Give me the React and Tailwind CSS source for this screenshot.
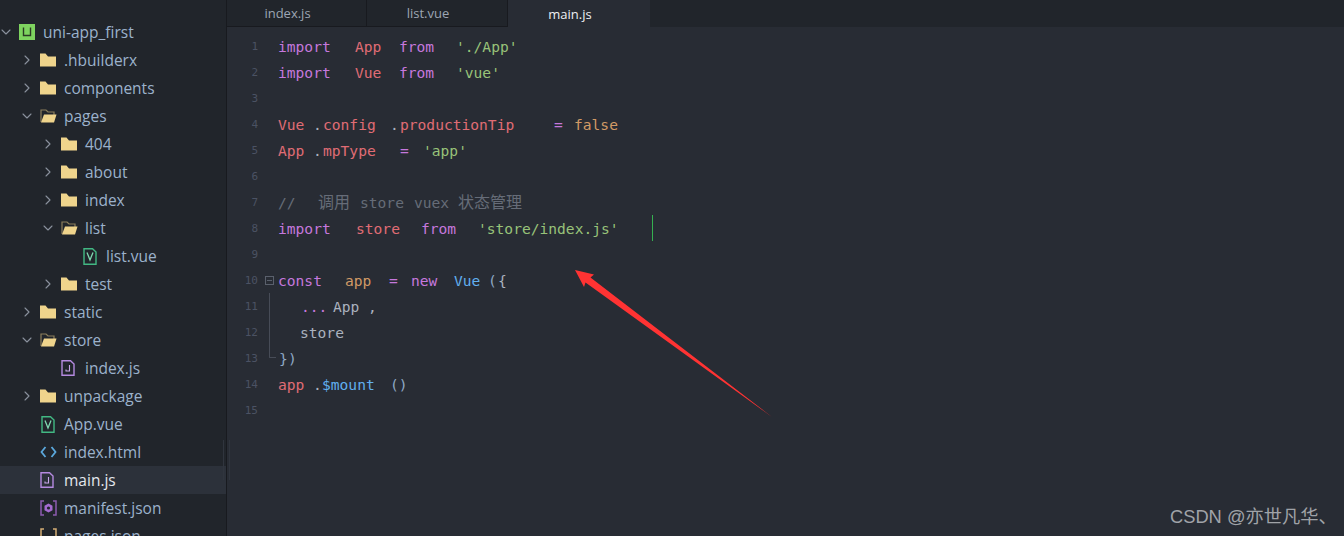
import React from "react";
import { ChevronRight, ChevronDown } from "lucide-react";

const PINK = "text-[#c678dd]";
const RED = "text-[#e06c75]";
const GREEN = "text-[#98c379]";
const ORANGE = "text-[#d19a66]";
const BLUE = "text-[#61afef]";
const PLAIN = "text-[#abb2bf]";
const BRACKET = "text-[#8fa8c4]";
const GRAY = "text-[#666c78]";

// every token is [text, colour, column width]
const lines = [
  [["import", PINK, "w-[77px]"], ["App", RED, "w-[44px]"], ["from", PINK, "w-[57px]"], ["'./App'", GREEN, "w-[70px]"]],
  [["import", PINK, "w-[77px]"], ["Vue", RED, "w-[44px]"], ["from", PINK, "w-[57px]"], ["'vue'", GREEN, "w-[50px]"]],
  [],
  [["Vue", RED, "w-[35px]"], [".", PLAIN, "w-[10px]"], ["config", RED, "w-[67px]"], [".", PLAIN, "w-[10px]"], ["productionTip", RED, "w-[154px]"], ["=", PINK, "w-[20px]"], ["false", ORANGE, "w-[50px]"]],
  [["App", RED, "w-[35px]"], [".", PLAIN, "w-[10px]"], ["mpType", RED, "w-[77px]"], ["=", PINK, "w-[23px]"], ["'app'", GREEN, "w-[50px]"]],
  [],
  [["//", GRAY, "w-[40px]"], ["调用", `${GRAY} text-[16px]`, "w-[42px]"], ["store", GRAY, "w-[54px]"], ["vuex", GRAY, "w-[44px]"], ["状态管理", `${GRAY} text-[16px]`, "w-[66px]"]],
  [["import", PINK, "w-[78px]"], ["store", RED, "w-[65px]"], ["from", PINK, "w-[57px]"], ["'store/index.js'", GREEN, "w-[142px]"]],
  [],
  [["const", PINK, "w-[67px]"], ["app", ORANGE, "w-[44px]"], ["=", PINK, "w-[22px]"], ["new", PINK, "w-[43px]"], ["Vue", BLUE, "w-[34px]"], ["(", BRACKET, "w-[10px]"], ["{", PLAIN, "w-[10px]"]],
  [["", PLAIN, "w-[23px]"], ["...", PINK, "w-[32px]"], ["App", PLAIN, "w-[35px]"], [",", PLAIN, "w-[10px]"]],
  [["", PLAIN, "w-[22px]"], ["store", PLAIN, "w-[50px]"]],
  [["", PLAIN, "w-[1px]"], ["}", BRACKET, "w-[9px]"], [")", BRACKET, "w-[10px]"]],
  [["app", RED, "w-[35px]"], [".", PLAIN, "w-[9px]"], ["$mount", BLUE, "w-[68px]"], ["()", BRACKET, "w-[20px]"]],
  [],
];

const tree = [
  { name: "uni-app_first", pad: "pl-0", arrow: "down", icon: "root" },
  { name: ".hbuilderx", pad: "pl-[21px]", arrow: "right", icon: "folder" },
  { name: "components", pad: "pl-[21px]", arrow: "right", icon: "folder" },
  { name: "pages", pad: "pl-[21px]", arrow: "down", icon: "open" },
  { name: "404", pad: "pl-[42px]", arrow: "right", icon: "folder" },
  { name: "about", pad: "pl-[42px]", arrow: "right", icon: "folder" },
  { name: "index", pad: "pl-[42px]", arrow: "right", icon: "folder" },
  { name: "list", pad: "pl-[42px]", arrow: "down", icon: "open" },
  { name: "list.vue", pad: "pl-[63px]", icon: "vue" },
  { name: "test", pad: "pl-[42px]", arrow: "right", icon: "folder" },
  { name: "static", pad: "pl-[21px]", arrow: "right", icon: "folder" },
  { name: "store", pad: "pl-[21px]", arrow: "down", icon: "open" },
  { name: "index.js", pad: "pl-[42px]", icon: "js" },
  { name: "unpackage", pad: "pl-[21px]", arrow: "right", icon: "folder" },
  { name: "App.vue", pad: "pl-[21px]", icon: "vue" },
  { name: "index.html", pad: "pl-[21px]", icon: "html" },
  { name: "main.js", pad: "pl-[21px]", icon: "js", active: true },
  { name: "manifest.json", pad: "pl-[21px]", icon: "manifest" },
  { name: "pages.json", pad: "pl-[21px]", icon: "json" },
];

const FileIcon = ({ type }) => {
  if (type === "folder") {
    return (
      <svg width="16" height="16" viewBox="0 0 16 16">
        <path d="M0 1.500h5.500l2.500 3H16V14.500H0z" fill="#efd48c" />
      </svg>
    );
  }
  if (type === "open") {
    return (
      <svg width="17" height="16" viewBox="0 0 17 16" fill="none">
        <path d="M1 14V2h5l2 2h6v3" stroke="#8c7f5c" strokeWidth="1.2" />
        <path d="M1 14.500 L4 6.500H16.500L14 14.500z" fill="#efd48c" />
      </svg>
    );
  }
  if (type === "root") {
    return (
      <svg width="16" height="16" viewBox="0 0 16 16" fill="none">
        <rect width="16" height="16" fill="#7ed35f" />
        <path d="M4.500 3.500V11.500H11.500V3.500" stroke="#2b3a24" strokeWidth="1.4" />
      </svg>
    );
  }
  if (type === "vue") {
    return (
      <svg width="15" height="17" viewBox="0 0 15 17" fill="none">
        <path d="M2 .7H10.500L14 4V16.300H2z" stroke="#42b883" strokeWidth="1.4" />
        <path d="M5 4.500L8 12L11 4.500" stroke="#7fd8b0" strokeWidth="1.3" />
      </svg>
    );
  }
  if (type === "js") {
    return (
      <svg width="14" height="16" viewBox="0 0 14 16" fill="none">
        <path d="M1 .7H9.500L13 4V15.300H1z" stroke="#b58ae0" strokeWidth="1.4" />
        <path d="M8.500 5V11H5V9.500" stroke="#c8a6ea" strokeWidth="1.1" />
      </svg>
    );
  }
  if (type === "html") {
    return (
      <svg width="17" height="16" viewBox="0 0 17 16" fill="none">
        <path d="M5.500 3L1.500 8L5.500 13" stroke="#5ba8dc" strokeWidth="1.8" />
        <path d="M11.500 3L15.500 8L11.500 13" stroke="#5ba8dc" strokeWidth="1.8" />
      </svg>
    );
  }
  if (type === "manifest") {
    return (
      <svg width="17" height="16" viewBox="0 0 17 16" fill="none">
        <path d="M4 1H1V15H4M13 1H16V15H13" stroke="#8c5bb0" strokeWidth="1.5" />
        <path d="M8.500 3.500L12.500 5.800V10.200L8.500 12.500L4.500 10.200V5.800z" fill="#a56bd0" />
        <circle cx="8.500" cy="8" r="1.600" fill="#21252b" />
      </svg>
    );
  }
  return (
    <svg width="17" height="16" viewBox="0 0 17 16" fill="none">
      <path d="M4 1H1V15H4M13 1H16V15H13" stroke="#d4ad75" strokeWidth="1.5" />
    </svg>
  );
};

const TreeRow = ({ item }) => (
  <div
    className={`flex h-[28px] items-center ${item.pad} ${item.active ? "bg-[#2c313a] text-[#e4e8ee]" : "text-[#9cb2cb]"}`}
  >
    <div className="flex w-[19px] shrink-0 justify-center pr-[7px]">
      {item.arrow === "right" && <ChevronRight size={16} strokeWidth={1.6} className="shrink-0 text-[#8b929e]" />}
      {item.arrow === "down" && <ChevronDown size={16} strokeWidth={1.6} className="shrink-0 text-[#8b929e]" />}
    </div>
    <div className="flex w-[24px] shrink-0 items-center">
      <FileIcon type={item.icon} />
    </div>
    <span className="whitespace-nowrap pt-[2px]">{item.name}</span>
  </div>
);

const Tab = ({ name, width, active }) => (
  <div
    className={`flex h-[27px] items-center justify-center pt-[2px] pr-[18px] text-[13px] ${width} ${
      active ? "bg-[#282c34] text-[#eef0f3]" : "border-r border-b border-[#181a1f] text-[#9da5b4]"
    }`}
  >
    {name}
  </div>
);

const CodeLine = ({ index, tokens }) => (
  <div className="flex h-[26px] items-center">
    <div className="w-[31px] shrink-0 text-right text-[11px] text-[#4b5263]">{index + 1}</div>
    <div className="w-[20px] shrink-0" />
    {tokens.map(([text, color, width], i) => (
      <span key={i} className={`shrink-0 whitespace-pre ${width} ${color}`}>
        {text}
      </span>
    ))}
  </div>
);

export default function App() {
  return (
    <div className="relative flex h-[536px] w-[1344px] overflow-hidden bg-[#282c34]">
      {/* File tree */}
      <aside className="h-full w-[227px] shrink-0 overflow-hidden border-r border-[#181a1f] bg-[#21252b] pt-[18px] font-['Open_Sans',sans-serif] text-[15.5px]">
        {tree.map((item) => (
          <TreeRow key={item.name} item={item} />
        ))}
      </aside>

      {/* Editor */}
      <main className="flex h-full min-w-0 flex-1 flex-col">
        <div className="flex h-[27px] shrink-0 bg-[#21252b] font-['Open_Sans',sans-serif]">
          <Tab name="index.js" width="w-[140px]" />
          <Tab name="list.vue" width="w-[141px]" />
          <Tab name="main.js" width="w-[142px]" active />
        </div>
        <div className="relative pt-[7px] font-['DejaVu_Sans_Mono','Noto_Sans_CJK_SC',monospace] text-[14.6px]">
          {lines.map((tokens, i) => (
            <CodeLine key={i} index={i} tokens={tokens} />
          ))}
          {/* cursor */}
          <div className="absolute top-[188px] left-[425px] h-[26px] w-px bg-[#35b050]" />
          {/* fold marker and guide */}
          <div className="absolute top-[249px] left-[38px] flex h-[9px] w-[9px] items-center justify-center border border-[#5a606c]">
            <div className="h-px w-[5px] bg-[#5a606c]" />
          </div>
          <div className="absolute top-[266px] left-[42px] h-[65px] w-[7px] rounded-bl-[1px] border-b border-l border-[#474c57]" />
        </div>
      </main>

      {/* Tree scrollbar */}
      <div className="absolute top-[440px] left-[223px] h-[40px] w-[7px] border-x border-[#30353e]" />

      {/* Red annotation arrow */}
      <svg className="absolute top-[262px] left-[568px]" width="212" height="162" viewBox="568 262 212 162">
        <path d="M575 270L594 274.500L590.500 277.500L772 417L585.500 282.500L584 287z" fill="#ff3333" />
      </svg>

      {/* Watermark */}
      <div className="absolute top-[505px] left-[1170px] font-['Liberation_Sans','Noto_Sans_CJK_SC',sans-serif] text-[18.3px] leading-[24px] whitespace-nowrap text-[#a0a3a8]">
        CSDN @亦世凡华、
      </div>
    </div>
  );
}
